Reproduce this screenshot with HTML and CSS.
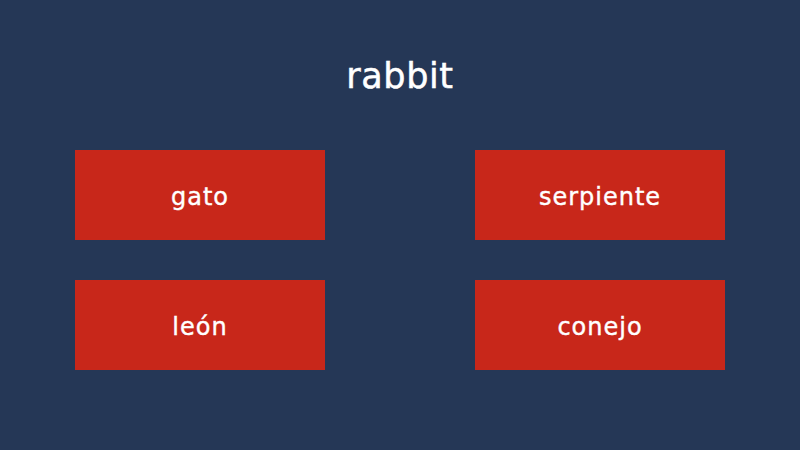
FILE: index.html
```html
<!DOCTYPE html>
<html>
<head>
<meta charset="utf-8">
<link rel="stylesheet" href="styles.css">
</head>
<body>
<div class="page">
  <h1 class="word">rabbit</h1>
  <div class="options">
    <div class="option">gato</div>
    <div class="option">serpiente</div>
    <div class="option">león</div>
    <div class="option">conejo</div>
  </div>
</div>
</body>
</html>
```
FILE: styles.css
```css
html, body {
  margin: 0;
  padding: 0;
  background: #253756;
}
.page {
  width: 800px;
  height: 450px;
  display: flex;
  flex-direction: column;
  align-items: center;
  font-family: "DejaVu Sans", sans-serif;
  color: #ffffff;
}
.word {
  margin: 53px 0 0 0;
  height: 46px;
  line-height: 46px;
  font-size: 35px;
  font-weight: normal;
  letter-spacing: 0.6px;
  -webkit-text-stroke: 0.5px #ffffff;
}
.options {
  margin-top: 51px;
  display: grid;
  grid-template-columns: 250px 250px;
  grid-auto-rows: 90px;
  column-gap: 150px;
  row-gap: 40px;
}
.option {
  background: #c8271a;
  display: flex;
  align-items: center;
  justify-content: center;
  padding-top: 3px;
  box-sizing: border-box;
  font-size: 24px;
  letter-spacing: 1px;
  -webkit-text-stroke: 0.4px #ffffff;
}
```
